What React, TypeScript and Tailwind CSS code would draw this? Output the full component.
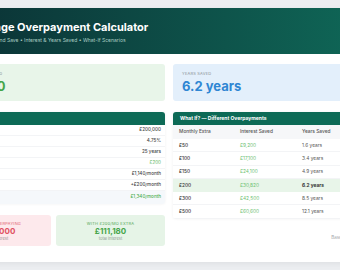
import React from 'react';

const details = [
  { label: 'Loan Amount', value: '£200,000' },
  { label: 'Interest Rate', value: '4.75%' },
  { label: 'Mortgage Term', value: '25 years' },
  { label: 'Monthly Overpayment', value: '£200', green: true },
  { label: 'Standard Payment', value: '£1,140/month' },
  { label: 'Overpayment', value: '+£200/month' },
];

const scenarios = [
  { extra: '£50', saved: '£9,200', years: '1.6 years', term: '23.4 yrs' },
  { extra: '£100', saved: '£17,100', years: '3.4 years', term: '21.6 yrs' },
  { extra: '£150', saved: '£24,100', years: '4.9 years', term: '20.1 yrs' },
  { extra: '£200', saved: '£30,820', years: '6.2 years', term: '18.8 yrs', active: true },
  { extra: '£300', saved: '£42,500', years: '8.5 years', term: '16.5 yrs' },
  { extra: '£500', saved: '£60,600', years: '12.1 years', term: '12.9 yrs' },
];

const App = () => {
  return (
    <div className="w-[340px] h-[270px] overflow-hidden bg-[#eceef1] font-['Inter',sans-serif]">
      <div className="ml-[-66px] w-[470px] pt-2">
        <div className="shadow-[0_2px_6px_rgba(0,0,0,0.06)]">
          {/* header */}
          <div className="h-[46px] bg-gradient-to-r from-[#0a2f33] to-[#0f6c5a] pl-[28px] pt-[13px]">
            <h1 className="text-[11px] leading-[13px] font-bold text-white">Mortgage Overpayment Calculator</h1>
            <p className="mt-[3px] text-[5px] leading-[6px] text-[#a9cdc3]">
              Overpay Early and Save • Interest &amp; Years Saved • What-If Scenarios
            </p>
          </div>

          {/* body */}
          <div className="bg-white px-[8px] pt-[10px] pb-[16px]">
            <div className="grid grid-cols-2 gap-[8px]">
              <div className="h-[37px] rounded-[3px] bg-[#e8f5e9] px-[9px] pt-[7px]">
                <div className="text-[4px] leading-[5px] uppercase tracking-wider text-[#8a8f94]">Total Interest Saved</div>
                <div className="mt-[3px] text-[13px] leading-[15px] font-bold text-[#45a549]">£30,820</div>
              </div>
              <div className="h-[37px] rounded-[3px] bg-[#e3effb] px-[9px] pt-[7px]">
                <div className="text-[4px] leading-[5px] uppercase tracking-wider text-[#8a8f94]">Years Saved</div>
                <div className="mt-[3px] text-[13px] leading-[15px] font-bold text-[#2f86d3]">6.2 years</div>
              </div>
            </div>

            <div className="mt-[11px] grid grid-cols-2 gap-[8px]">
              {/* left column */}
              <div>
                <div className="rounded-[3px] bg-white shadow-[0_0_3px_rgba(0,0,0,0.06)] overflow-hidden">
                  <div className="h-[13px] bg-[#0d6a56] px-[7px] flex items-center text-[5px] font-bold text-white">Your Mortgage</div>
                  {details.map((d) => (
                    <div key={d.label} className="h-[11px] flex items-center justify-between px-[6px] pr-[4px] border-b border-[#f3f4f6] text-[4.6px]">
                      <span className="text-[#444]">{d.label}</span>
                      <span className={d.green ? 'text-[#5cb860]' : 'font-medium text-[#444]'}>{d.value}</span>
                    </div>
                  ))}
                  <div className="h-[13px] flex items-center justify-between px-[6px] pr-[4px] bg-[#f5f8fb] text-[4.6px]">
                    <span className="font-medium text-[#333]">New Monthly Payment</span>
                    <span className="font-medium text-[#4caf50]">£1,340/month</span>
                  </div>
                </div>

                <div className="mt-[11px] grid grid-cols-2 gap-[5px]">
                  <div className="h-[31px] rounded-[3px] bg-[#fde9ec] flex flex-col items-center justify-center">
                    <div className="text-[4px] leading-[5px] uppercase tracking-wider text-[#e0606c]">Without Overpaying</div>
                    <div className="text-[8px] leading-[10px] font-bold text-[#e05262]">£142,000</div>
                    <div className="text-[4px] leading-[5px] text-[#9a8f91]">total interest</div>
                  </div>
                  <div className="h-[31px] rounded-[3px] bg-[#e6f4e7] flex flex-col items-center justify-center">
                    <div className="text-[4px] leading-[5px] uppercase tracking-wider text-[#55a859]">With £200/mo extra</div>
                    <div className="text-[8px] leading-[10px] font-bold text-[#47a54b]">£111,180</div>
                    <div className="text-[4px] leading-[5px] text-[#8f9a90]">total interest</div>
                  </div>
                </div>
              </div>

              {/* right column */}
              <div>
                <div className="rounded-[3px] bg-white shadow-[0_0_3px_rgba(0,0,0,0.06)] overflow-hidden">
                  <div className="h-[13px] bg-[#0d6a56] px-[7px] flex items-center text-[5px] font-bold text-white">
                    What If? — Different Overpayments
                  </div>
                  <div className="h-[14px] grid grid-cols-[61px_62px_62px_1fr] items-center px-[6px] bg-[#f6f7f9] text-[4.8px] font-medium text-[#555]">
                    <span>Monthly Extra</span>
                    <span>Interest Saved</span>
                    <span>Years Saved</span>
                    <span>New Term</span>
                  </div>
                  {scenarios.map((s) => (
                    <div
                      key={s.extra}
                      className={
                        s.active
                          ? 'h-[13.3px] grid grid-cols-[61px_62px_62px_1fr] items-center px-[6px] bg-[#e8f5e9] text-[4.8px] font-bold text-[#333]'
                          : 'h-[13.3px] grid grid-cols-[61px_62px_62px_1fr] items-center px-[6px] border-b border-[#f3f4f6] text-[4.8px] text-[#555]'
                      }
                    >
                      <span className="font-medium text-[#333]">{s.extra}</span>
                      <span className="font-normal text-[#6cc070]">{s.saved}</span>
                      <span>{s.years}</span>
                      <span>{s.term}</span>
                    </div>
                  ))}
                </div>
                <p className="mt-[16px] pr-[6px] text-right text-[4.5px] leading-[6px] text-[#a0a4a8]">Based on 4.75% over 25yrs</p>
              </div>
            </div>
          </div>
        </div>
      </div>
    </div>
  );
};

export default App;
